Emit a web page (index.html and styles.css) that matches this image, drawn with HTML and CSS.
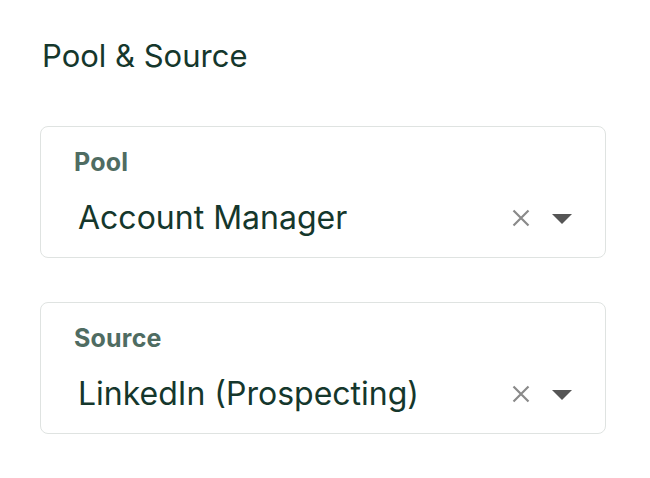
FILE: index.html
```html
<!DOCTYPE html>
<html>
<head>
<meta charset="utf-8">
<link rel="stylesheet" href="styles.css">
</head>
<body>
<div class="page">
  <h2 class="title">Pool &amp; Source</h2>
  <div class="fields">
    <div class="field">
      <div class="label">Pool</div>
      <div class="control">
        <span class="value">Account Manager</span>
        <span class="icons">
          <svg class="clear" width="18" height="18" viewBox="0 0 18 18"><path d="M1.5 1.5L16.5 16.5M16.5 1.5L1.5 16.5" stroke="#8a8a8a" stroke-width="2.2" fill="none"/></svg>
          <svg class="caret" width="20" height="10" viewBox="0 0 20 10"><path d="M0 0H20L10 10Z" fill="#555555"/></svg>
        </span>
      </div>
    </div>
    <div class="field">
      <div class="label">Source</div>
      <div class="control">
        <span class="value">LinkedIn (Prospecting)</span>
        <span class="icons">
          <svg class="clear" width="18" height="18" viewBox="0 0 18 18"><path d="M1.5 1.5L16.5 16.5M16.5 1.5L1.5 16.5" stroke="#8a8a8a" stroke-width="2.2" fill="none"/></svg>
          <svg class="caret" width="20" height="10" viewBox="0 0 20 10"><path d="M0 0H20L10 10Z" fill="#555555"/></svg>
        </span>
      </div>
    </div>
  </div>
</div>
</body>
</html>
```
FILE: styles.css
```css
html, body {
  margin: 0;
  padding: 0;
  background: #ffffff;
}
body {
  font-family: Inter, "Liberation Sans", Arial, sans-serif;
  color: #15372c;
}
.page {
  padding: 36px 44px 0 40px;
}
.title {
  margin: 0 0 50px 2px;
  font-size: 31px;
  line-height: 40px;
  font-weight: 400;
  color: #15372c;
}
.fields {
  display: flex;
  flex-direction: column;
  gap: 44px;
}
.field {
  border: 1px solid #dfe3e1;
  border-radius: 8px;
  padding: 21px 33px 21px 33px;
  display: flex;
  flex-direction: column;
  gap: 24px;
}
.label {
  font-size: 25px;
  line-height: 28px;
  font-weight: 700;
  letter-spacing: 0.2px;
  color: #4f6c62;
}
.control {
  display: flex;
  align-items: center;
  justify-content: space-between;
  height: 36px;
}
.value {
  margin-left: 4px;
  font-size: 32px;
  line-height: 36px;
  color: #15372c;
}
.icons {
  display: flex;
  align-items: center;
  gap: 22px;
}
.clear {
  display: block;
}
.caret {
  display: block;
  margin-top: 1px;
}
```
